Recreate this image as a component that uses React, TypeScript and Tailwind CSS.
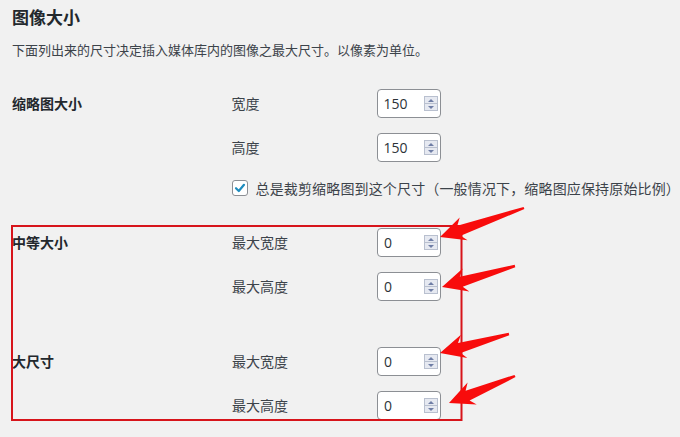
import React from "react";

const cjk = '"Open Sans", "Noto Sans CJK SC", sans-serif';

type Pt = [number, number];

// hand-drawn style annotation arrow, tip points at the spinner
const arrowPoints = (tail: Pt, tip: Pt) => {
  const dx = tail[0] - tip[0];
  const dy = tail[1] - tip[1];
  const len = Math.hypot(dx, dy);
  const b: Pt = [dx / len, dy / len];
  const n: Pt = [-b[1], b[0]];
  const at = (back: number, side: number): Pt => [
    tip[0] + b[0] * back + n[0] * side,
    tip[1] + b[1] * back + n[1] * side,
  ];
  const pts: Pt[] = [
    tip,
    at(25, -12),
    at(20, -5),
    at(len, -1.2),
    at(len, 1.2),
    at(20, 5.5),
    at(25, 12),
  ];
  return pts.map((p) => `${p[0].toFixed(1)},${p[1].toFixed(1)}`).join(" ");
};

const arrows: { tail: Pt; tip: Pt }[] = [
  { tail: [524, 208], tip: [440, 237] },
  { tail: [515, 266], tip: [442, 287] },
  { tail: [509, 334], tip: [440, 353] },
  { tail: [515, 376], tip: [449, 403] },
];

const Spinner = () => (
  <div className="flex flex-col w-[14px] h-[15px] border border-[#b9c0cf] bg-[#e6e9f1]">
    <div className="flex-1 flex items-center justify-center border-b border-[#b9c0cf]">
      <div className="w-0 h-0 border-l-[3px] border-r-[3px] border-b-[3px] border-l-transparent border-r-transparent border-b-[#6f7ea6]" />
    </div>
    <div className="flex-1 flex items-center justify-center">
      <div className="w-0 h-0 border-l-[3px] border-r-[3px] border-t-[3px] border-l-transparent border-r-transparent border-t-[#6f7ea6]" />
    </div>
  </div>
);

const NumberField = ({ label, value, className = "" }: { label: string; value: string; className?: string }) => (
  <div className={`flex items-center h-[29px] ${className}`}>
    <span className="w-[145px] text-[14px] text-[#3c434a]">{label}</span>
    <div className="flex items-center justify-between w-[64px] h-[29px] pl-[6px] pr-[2px] bg-white border border-[#8c8f94] rounded-[4px]">
      <span className="text-[14px] text-[#2c3338]">{value}</span>
      <Spinner />
    </div>
  </div>
);

const SizeSection = ({
  title,
  fields,
  className = "",
  children,
}: {
  title: string;
  fields: { label: string; value: string }[];
  className?: string;
  children?: React.ReactNode;
}) => (
  <div className={`flex ${className}`}>
    <div className="w-[220px] h-[29px] flex items-center text-[14px] font-bold text-[#23282d]">{title}</div>
    <div className="flex flex-col">
      {fields.map((f, i) => (
        <NumberField key={f.label} label={f.label} value={f.value} className={i > 0 ? "mt-[15px]" : ""} />
      ))}
      {children}
    </div>
  </div>
);

export default function App() {
  return (
    <div className="relative w-[680px] h-[437px] overflow-hidden bg-[#f1f1f1]" style={{ fontFamily: cjk }}>
      <div className="pl-[12px]">
        <h2 className="mt-[7px] text-[17px] leading-[22px] font-bold text-[#23282d]">图像大小</h2>
        <p className="mt-[11px] text-[13px] leading-[20px] text-[#3c434a]">
          下面列出来的尺寸决定插入媒体库内的图像之最大尺寸。以像素为单位。
        </p>

        <SizeSection
          title="缩略图大小"
          className="mt-[29px]"
          fields={[
            { label: "宽度", value: "150" },
            { label: "高度", value: "150" },
          ]}
        >
          <div className="mt-[16px] h-[20px] flex items-center gap-[8px]">
            <span className="flex items-center justify-center w-[16px] h-[16px] bg-white border border-[#8c8f94] rounded-[3px]">
              <svg width="12" height="12" viewBox="0 0 12 12">
                <path d="M2 6.2 L4.8 9 L10 2.8" fill="none" stroke="#1e8cbe" strokeWidth="2.2" strokeLinecap="round" strokeLinejoin="round" />
              </svg>
            </span>
            <span className="text-[14px] tracking-[0.15px] whitespace-nowrap text-[#3c434a]">
              总是裁剪缩略图到这个尺寸（一般情况下，缩略图应保持原始比例）
            </span>
          </div>
        </SizeSection>

        <SizeSection
          title="中等大小"
          className="mt-[30px]"
          fields={[
            { label: "最大宽度", value: "0" },
            { label: "最大高度", value: "0" },
          ]}
        />

        <SizeSection
          title="大尺寸"
          className="mt-[46px]"
          fields={[
            { label: "最大宽度", value: "0" },
            { label: "最大高度", value: "0" },
          ]}
        />
      </div>

      {/* annotation overlay */}
      <svg className="absolute inset-0 pointer-events-none" width="680" height="437">
        <rect x="12" y="226" width="449.5" height="194" fill="none" stroke="#d7141b" strokeWidth="2" />
        {arrows.map((a, i) => (
          <polygon key={i} points={arrowPoints(a.tail, a.tip)} fill="#f80c0c" />
        ))}
      </svg>
    </div>
  );
}
